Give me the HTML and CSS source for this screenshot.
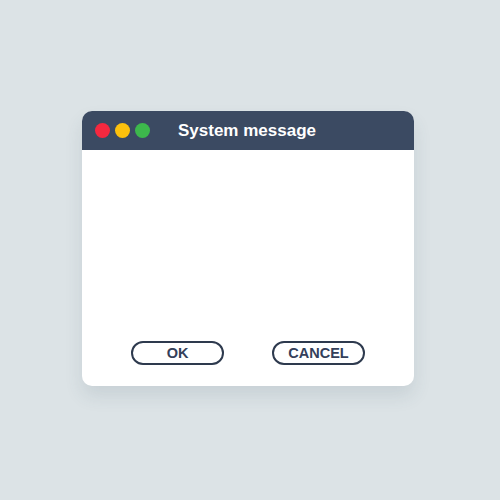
FILE: index.html
```html
<!DOCTYPE html>
<html lang="en">
<head>
    <meta charset="UTF-8">
    <title>System message</title>
    <link rel="stylesheet" href="styles.css">
</head>
<body>
    <div class="window">
        <div class="title-bar">
            <div class="dots">
                <span class="dot red"></span>
                <span class="dot yellow"></span>
                <span class="dot green"></span>
            </div>
            <h1>System message</h1>
        </div>
        <div class="content"></div>
        <div class="actions">
            <button class="btn">OK</button>
            <button class="btn">CANCEL</button>
        </div>
    </div>
</body>
</html>
```

FILE: styles.css
```css
body {
    font-family: 'Liberation Sans', Arial, sans-serif;
    background-color: #dce3e6;
    margin: 0;
    padding: 111px 0 0 82px;
    min-height: 100vh;
    box-sizing: border-box;
}

.window {
    width: 332px;
    height: 275px;
    background-color: white;
    border-radius: 10px;
    overflow: hidden;
    display: flex;
    flex-direction: column;
    box-shadow: 0 10px 18px rgba(60, 80, 100, 0.12);
}

.title-bar {
    height: 39px;
    background-color: #3b4a62;
    display: flex;
    align-items: center;
    padding-left: 13px;
}

.dots {
    display: flex;
    gap: 5px;
}

.dot {
    width: 15px;
    height: 15px;
    border-radius: 50%;
}

.red { background-color: #f5283f; }
.yellow { background-color: #fcc10d; }
.green { background-color: #3db84c; }

h1 {
    margin: 0 0 0 28px;
    color: white;
    font-size: 17px;
    font-weight: bold;
}

.content {
    flex: 1;
}

.actions {
    display: flex;
    justify-content: space-between;
    padding: 0 49px 21px;
}

.btn {
    width: 93px;
    height: 24px;
    border: 2px solid #2e3a4e;
    border-radius: 12px;
    background-color: white;
    color: #34405a;
    font-family: 'Liberation Sans', Arial, sans-serif;
    font-size: 14.5px;
    font-weight: bold;
    padding: 0;
}
```
